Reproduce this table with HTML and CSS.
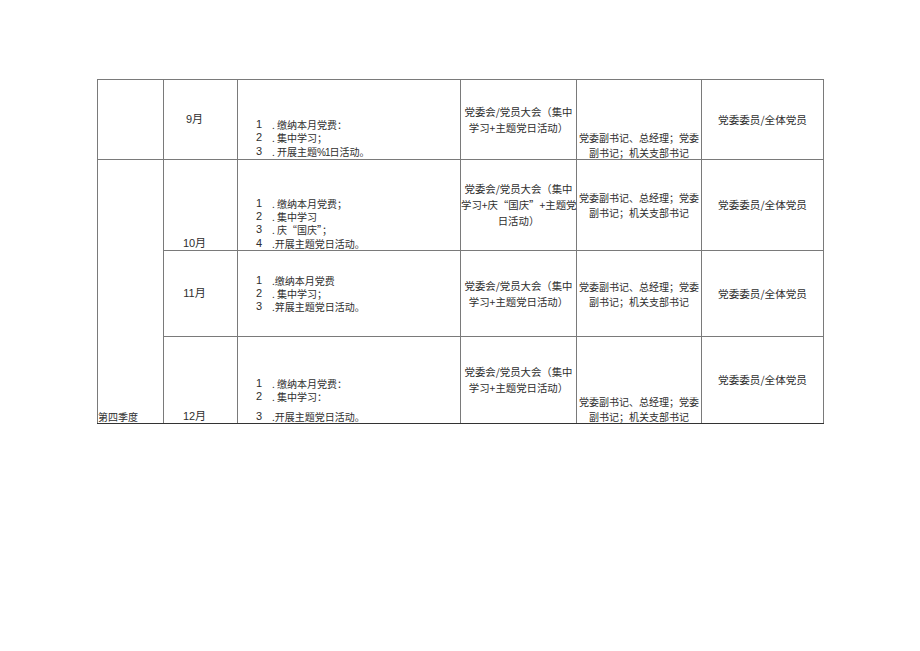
FILE: index.html
```html
<!DOCTYPE html>
<html lang="zh">
<head>
<meta charset="utf-8">
<link rel="stylesheet" href="styles.css">
</head>
<body>
<div class="page">
<table class="plan">
<colgroup>
<col class="c1"><col class="c2"><col class="c3"><col class="c4"><col class="c5"><col class="c6">
</colgroup>
<tr class="r1">
<td></td>
<td class="month mid">9月</td>
<td class="list bot">
<div class="li"><span class="n">1</span><span class="t">. 缴纳本月党费：</span></div>
<div class="li"><span class="n">2</span><span class="t">. 集中学习；</span></div>
<div class="li"><span class="n">3</span><span class="t">. 开展主题<span class="a">%1</span>日活动。</span></div>
</td>
<td class="form mid">党委会/党员大会（集中<br>学习+主题党日活动）</td>
<td class="lead bot"><div class="sink">党委副书记、总经理；党委<br>副书记；机关支部书记</div></td>
<td class="who mid">党委委员/全体党员</td>
</tr>
<tr class="r2">
<td class="quarter bot" rowspan="3">第四季度</td>
<td class="month bot">10月</td>
<td class="list bot">
<div class="li"><span class="n">1</span><span class="t">. 缴纳本月党费；</span></div>
<div class="li"><span class="n">2</span><span class="t">. 集中学习</span></div>
<div class="li"><span class="n">3</span><span class="t">. 庆“国庆”；</span></div>
<div class="li"><span class="n">4</span><span class="t">.开展主题党日活动。</span></div>
</td>
<td class="form mid">党委会/党员大会（集中<br>学习+庆“国庆”+主题党<br>日活动）</td>
<td class="lead mid">党委副书记、总经理；党委<br>副书记；机关支部书记</td>
<td class="who mid">党委委员/全体党员</td>
</tr>
<tr class="r3">
<td class="month mid">11月</td>
<td class="list mid">
<div class="li"><span class="n">1</span><span class="t">.缴纳本月党费</span></div>
<div class="li"><span class="n">2</span><span class="t">. 集中学习；</span></div>
<div class="li"><span class="n">3</span><span class="t">.笄展主题党日活动。</span></div>
</td>
<td class="form mid">党委会/党员大会（集中<br>学习+主题党日活动）</td>
<td class="lead mid">党委副书记、总经理；党委<br>副书记；机关支部书记</td>
<td class="who mid">党委委员/全体党员</td>
</tr>
<tr class="r4">
<td class="month bot">12月</td>
<td class="list bot">
<div class="li"><span class="n">1</span><span class="t">. 缴纳本月党费：</span></div>
<div class="li"><span class="n">2</span><span class="t">. 集中学习：</span></div>
<div class="li gap"><span class="n">3</span><span class="t">.开展主题党日活动。</span></div>
</td>
<td class="form mid">党委会/党员大会（集中<br>学习+主题党日活动）</td>
<td class="lead bot"><div class="sink">党委副书记、总经理；党委<br>副书记；机关支部书记</div></td>
<td class="who mid">党委委员/全体党员</td>
</tr>
</table>
</div>
</body>
</html>
```

FILE: styles.css
```css
html, body {
  margin: 0;
  padding: 0;
  background: #ffffff;
}

.page {
  padding: 79px 0 0 97px;
  font-family: "Noto Sans CJK SC", "Liberation Sans", sans-serif;
  color: #2e2e2e;
}

.plan {
  border-collapse: collapse;
  table-layout: fixed;
  width: 726px;
}

.c1 { width: 66px; }
.c2 { width: 74px; }
.c3 { width: 223px; }
.c4 { width: 116px; }
.c5 { width: 125px; }
.c6 { width: 122px; }

.plan td {
  border: 1px solid #7a7a7a;
  padding: 0;
  font-size: 10px;
  white-space: nowrap;
}

.plan tr:last-child td,
.plan td.quarter {
  border-bottom: 1px solid #333333;
}

.r1 { height: 80px; }
.r2 { height: 91px; }
.r3 { height: 86px; }
.r4 { height: 87px; }

.mid { vertical-align: middle; }
.bot { vertical-align: bottom; }

.month {
  text-align: center;
  padding-right: 12px !important;
  line-height: 13px;
  font-family: "Liberation Sans", "Noto Sans CJK SC", sans-serif;
  font-size: 11px !important;
}

.quarter {
  text-align: left;
  line-height: 13px;
}

.list {
  padding-left: 18px !important;
  line-height: 13.3px;
}

.li {
  display: flex;
}

.li.gap {
  margin-top: 6px;
}

.n {
  width: 16px;
  flex: none;
  font-family: "Liberation Sans", sans-serif;
  font-size: 11px;
}

.t {
  font-size: 10px;
}

.a {
  font-family: "Liberation Sans", sans-serif;
  font-size: 10px;
  letter-spacing: -1px;
}

.form {
  text-align: center;
  font-size: 10.4px !important;
  line-height: 16px;
}

.lead {
  text-align: center;
  font-size: 10px !important;
  line-height: 15px;
}

.sink {
  margin-bottom: -1px;
}

.who {
  text-align: center;
  font-size: 10.6px !important;
  line-height: 16px;
}
```
